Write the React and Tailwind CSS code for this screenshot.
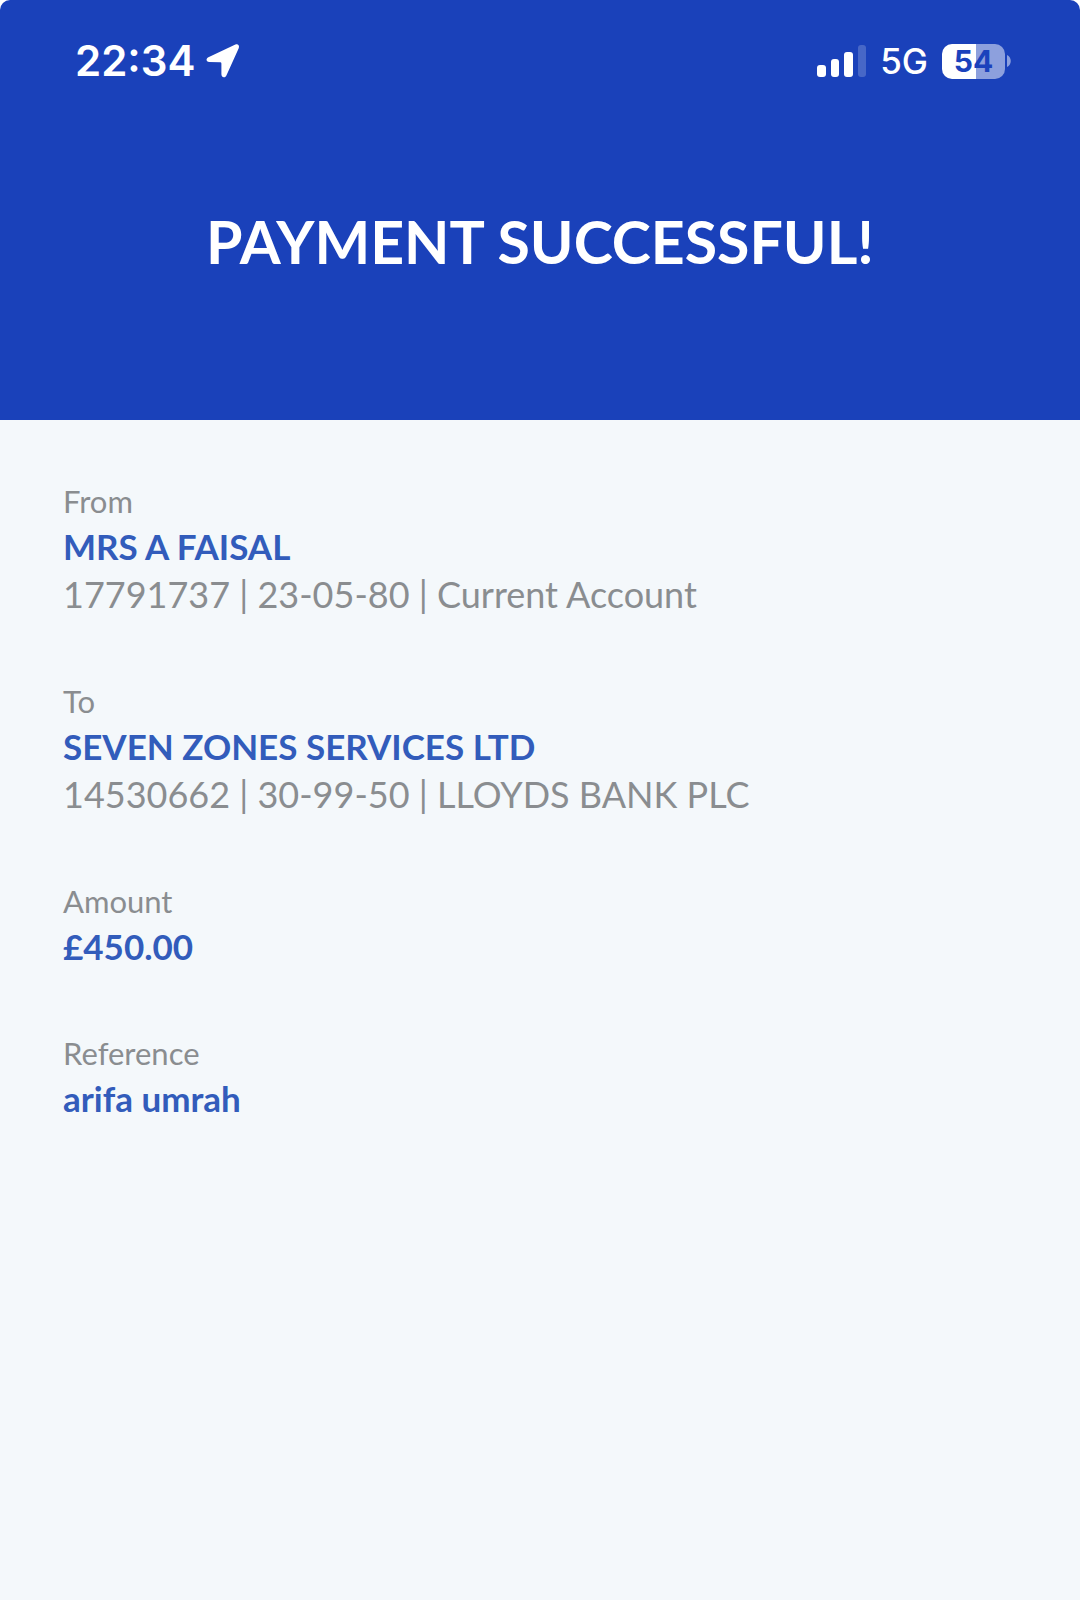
const details = [
  { label: 'From', value: 'MRS A FAISAL', note: '17791737 | 23-05-80 | Current Account' },
  { label: 'To', value: 'SEVEN ZONES SERVICES LTD', note: '14530662 | 30-99-50 | LLOYDS BANK PLC' },
  { label: 'Amount', value: '£450.00' },
  { label: 'Reference', value: 'arifa umrah' },
];

function LocationArrow() {
  return (
    <svg width="34" height="34" viewBox="0 0 34 34" fill="white" aria-hidden="true">
      <path d="M29.4 .5 L2.4 13.2 C-.4 14.6 0 18 3.2 18.1 L14.2 18.3 Q15.4 18.3 15.4 19.4 L15.4 30.2 C15.5 33.8 19 34.2 20.4 31.4 L32.6 4.4 C33.8 1.6 32.2 -.8 29.4 .5Z" />
    </svg>
  );
}

function SignalBars() {
  return (
    <svg width="49" height="32" viewBox="0 0 49 32" fill="white" aria-hidden="true">
      <rect x="0" y="20" width="9" height="12" rx="3" />
      <rect x="14" y="14" width="8" height="18" rx="3" />
      <rect x="27" y="7" width="9" height="25" rx="3" />
      <rect x="41" y="0" width="8" height="32" rx="3" fillOpacity="0.2" />
    </svg>
  );
}

function Battery({ level }) {
  return (
    <div className="flex items-center gap-[2px]">
      <div className="flex h-[35px] w-[63px] items-center justify-center rounded-[10px] bg-[linear-gradient(90deg,white_54%,#8da0dd_54%)] text-[30px] leading-none font-bold text-[#1b42bc]">
        {level}
      </div>
      <svg width="4" height="12" viewBox="0 0 4 12" fill="#8da0dd" aria-hidden="true">
        <path d="M0 0 C5 2 5 10 0 12Z" />
      </svg>
    </div>
  );
}

export default function App() {
  return (
    <div className="min-h-screen bg-[#f4f8fb] font-['Lato',sans-serif]">
      <div className="bg-white">
        <header className="rounded-t-[10px] bg-[#1a41ba] pb-[140px] text-white">
          <div className="flex items-center justify-between pt-[35px] pr-[69px] pl-[75px] font-['Inter',sans-serif]">
            <div className="flex items-center gap-[11px]">
              <time className="text-[42px] leading-[52px] font-semibold">22:34</time>
              <LocationArrow />
            </div>
            <div className="flex items-center gap-[14px]">
              <SignalBars />
              <span className="text-[35px] leading-none font-medium">5G</span>
              <Battery level={54} />
            </div>
          </div>
          <h1 className="mt-[117px] text-center text-[59px] leading-[76px] font-bold">PAYMENT SUCCESSFUL!</h1>
        </header>
      </div>
      <main className="px-[63px] pt-[60px]">
        <dl className="flex flex-col gap-[62px]">
          {details.map(({ label, value, note }) => (
            <div key={label}>
              <dt className="text-[31px] leading-[42px] text-[#8a8d90]">{label}</dt>
              <dd className="text-[35px] leading-[48px] font-bold text-[#325cbb]">{value}</dd>
              {note && <dd className="text-[36px] leading-[48px] text-[#8a8d90]">{note}</dd>}
            </div>
          ))}
        </dl>
      </main>
    </div>
  );
}
